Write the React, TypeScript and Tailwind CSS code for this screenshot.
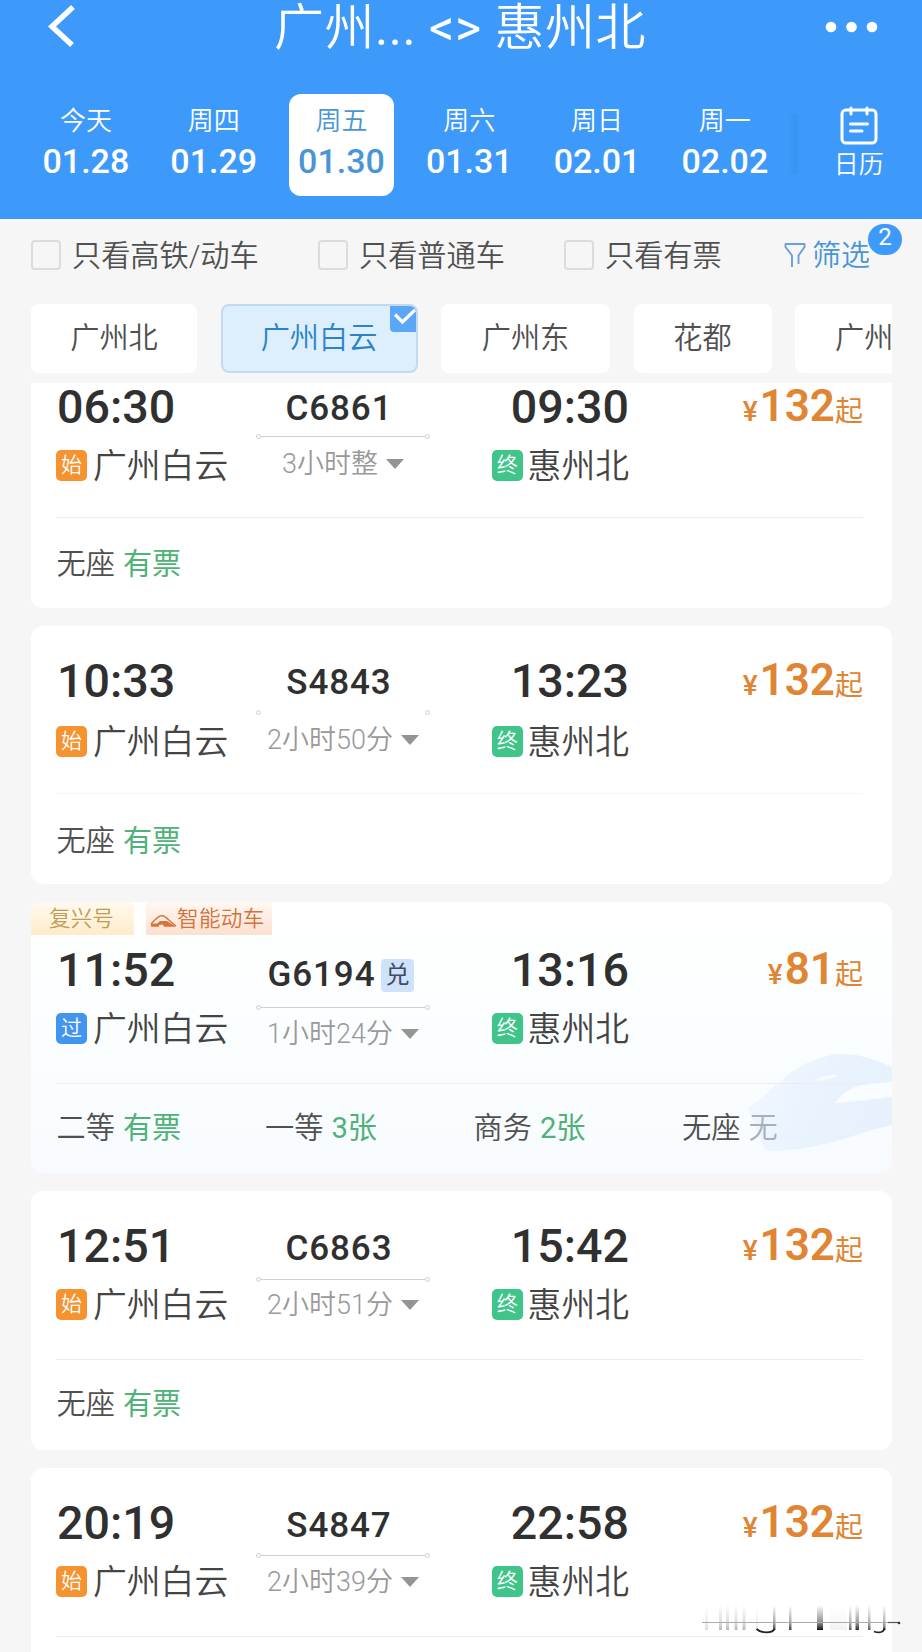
import clsx from "clsx";

type Seat = { name: string; left: string; soldOut?: boolean };

type Train = {
  no: string;
  depart: string;
  arrive: string;
  duration: string;
  price: string;
  variant: "first" | "normal" | "tight" | "smart";
  passing?: boolean;
  hideLine?: boolean;
  seats: Seat[];
};

const days = [
  { label: "今天", date: "01.28" },
  { label: "周四", date: "01.29" },
  { label: "周五", date: "01.30", active: true },
  { label: "周六", date: "01.31" },
  { label: "周日", date: "02.01" },
  { label: "周一", date: "02.02" },
];

const standing: Seat[] = [{ name: "无座", left: "有票" }];

const trains: Train[] = [
  { no: "C6861", depart: "06:30", arrive: "09:30", duration: "3小时整", price: "132", variant: "first", seats: standing },
  { no: "S4843", depart: "10:33", arrive: "13:23", duration: "2小时50分", price: "132", variant: "normal", hideLine: true, seats: standing },
  {
    no: "G6194",
    depart: "11:52",
    arrive: "13:16",
    duration: "1小时24分",
    price: "81",
    variant: "smart",
    passing: true,
    seats: [
      { name: "二等", left: "有票" },
      { name: "一等", left: "3张" },
      { name: "商务", left: "2张" },
      { name: "无座", left: "无", soldOut: true },
    ],
  },
  { no: "C6863", depart: "12:51", arrive: "15:42", duration: "2小时51分", price: "132", variant: "tight", seats: standing },
  { no: "S4847", depart: "20:19", arrive: "22:58", duration: "2小时39分", price: "132", variant: "tight", seats: standing },
];

// vertical rhythm of each kind of card
const spacing = {
  first: { info: "h-[169px]", time: "pt-[33px]", station: "mt-[14px]", no: "pt-[40px]", line: "mt-[3px]", duration: "mt-[8px]", seats: "mt-[26px]" },
  normal: { info: "h-[168.500px]", time: "pt-[30px]", station: "mt-[16px]", no: "pt-[37px]", line: "mt-[6px]", duration: "mt-[7px]", seats: "mt-[26.500px]" },
  tight: { info: "h-[169px]", time: "pt-[30px]", station: "mt-[14px]", no: "pt-[38px]", line: "mt-[6px]", duration: "mt-[6px]", seats: "mt-[24px]" },
  smart: { info: "h-[149px]", time: "pt-[10px]", station: "mt-[14px]", no: "pt-[20px]", line: "mt-[8px]", duration: "mt-[7px]", seats: "mt-[24px]" },
};

const Header = () => (
  <header className="h-[219px] bg-[#3e9afa] text-white">
    <div className="flex h-[54px] items-center justify-between pl-[46px] pr-[43px]">
      <svg width="34" height="48" viewBox="0 0 34 48" fill="none" stroke="currentColor" strokeWidth="5.5">
        <path d="M27 4 6 23.5 26 42" />
      </svg>
      <h1 className="ml-[15px] whitespace-pre pt-[2px] text-[50px] leading-[52px] font-[350] tracking-[0.5px]">
        广州<span className="font-normal">... &lt;&gt; </span>惠州北
      </h1>
      <svg width="54" height="12" viewBox="0 0 54 12" fill="currentColor">
        <circle cx="6" cy="6" r="5.3" />
        <circle cx="26.5" cy="6" r="5.3" />
        <circle cx="47" cy="6" r="5.3" />
      </svg>
    </div>

    {/* Date strip */}
    <div className="mt-10 flex pl-[22px]">
      {days.map((d) => (
        <div key={d.date} className="flex w-[127.8px] justify-center">
          <div
            className={clsx(
              "flex h-[102px] w-[105px] flex-col items-center rounded-[12px] pt-[10px]",
              d.active && "bg-white text-[#4a95d6]"
            )}
          >
            <span className="text-[26px] leading-[34px] font-[350]">{d.label}</span>
            <span className="mt-[3px] text-[34px] leading-[40px] font-medium">{d.date}</span>
          </div>
        </div>
      ))}
      <div className="mt-5 h-[60px] w-[12px] bg-linear-to-r from-[#3e9afa] via-[#3993f4] to-[#3e9afa]" />
      <div className="ml-[23px] flex w-[70px] flex-col items-center pt-[12px]">
        <svg width="40" height="40" viewBox="0 0 40 40" fill="none" stroke="currentColor" strokeWidth="3" strokeLinecap="round">
          <rect x="3" y="4" width="34" height="33" rx="4" />
          <path d="M12 2v6M28 2v6M11.5 18h17M11.5 25h11.500" />
        </svg>
        <span className="mt-[2px] text-[25px] leading-[34px] font-[350]">日历</span>
      </div>
    </div>
  </header>
);

const Check = ({ label, className }: { label: string; className: string }) => (
  <label className={clsx("flex items-center", className)}>
    <span className="h-[30px] w-[30px] rounded-[4px] border-2 border-[#dcdcdc]" />
    <span className="ml-[11px] pt-[2px] text-[29.2px] leading-[40px] font-[350] text-[#505050]">{label}</span>
  </label>
);

const Filters = () => (
  <div className="flex h-[85px] pt-[16px] pl-[31px]">
    <Check label="只看高铁/动车" className="h-10 w-[287px]" />
    <Check label="只看普通车" className="h-10 w-[246px]" />
    <Check label="只看有票" className="h-10 w-[220px]" />
    <div className="relative flex h-10 items-center text-[#4a95d6]">
      <svg width="22" height="27" viewBox="0 0 22 27" fill="none" stroke="#6d9fd8" strokeWidth="1.9" strokeLinejoin="round">
        <path d="M8 25V13.500L1.500 5V2H20.500V5L14.500 13.500V22" />
      </svg>
      <span className="ml-[6px] pt-[2px] text-[29px] leading-[40px] font-[350]">筛选</span>
      <span className="absolute -top-[11px] left-[84px] h-[31px] w-[34px] rounded-full bg-[#3e9afa] text-center text-[24px] leading-[27px] text-white">
        2
      </span>
    </div>
  </div>
);

const chip = "h-[69px] shrink-0 rounded-[8px] bg-white text-center text-[29.2px] leading-[68px] font-[350] text-[#505050]";

const Stations = () => (
  <div className="mx-[31px] flex w-[860.5px] gap-[23.5px] overflow-hidden">
    <div className={clsx(chip, "w-[166px]")}>广州北</div>
    <div className="relative h-[69px] w-[197px] shrink-0 overflow-hidden rounded-[8px] border-2 border-[#c2daf0] bg-[#ddeefd] text-center text-[29.2px] leading-[64px] font-[350] text-[#2b84cb]">
      广州白云
      <svg className="absolute top-0 right-0" width="26" height="26" viewBox="0 0 26 26" fill="none">
        <path d="M0 0H26V26H4a4 4 0 0 1-4-4Z" fill="#5aa7f8" />
        <path d="M5 8.500 12.500 16 25 4" stroke="#fff" strokeWidth="3.2" />
      </svg>
    </div>
    <div className={clsx(chip, "w-[169px]")}>广州东</div>
    <div className={clsx(chip, "w-[138px]")}>花都</div>
    <div className={clsx(chip, "w-[170px] pl-[40px] text-left")}>广州</div>
  </div>
);

const Tag = ({ text, color }: { text: string; color: string }) => (
  <span className={clsx("h-[31px] w-[31px] rounded-[5px] text-center text-[21px] leading-[30px] text-white", color)}>
    {text}
  </span>
);

const TrainCard = ({ train }: { train: Train }) => {
  const gap = spacing[train.variant];
  const smart = train.variant === "smart";

  return (
    <article
      className={clsx(
        "relative shrink-0 overflow-hidden rounded-[12px]",
        smart ? "h-[271px] bg-linear-to-b from-white via-[#fbfeff] to-[#f7fbff]" : "h-[258.5px] bg-white"
      )}
    >
      {smart && (
        <>
          <svg className="absolute right-0 bottom-0" width="160" height="130" viewBox="0 0 160 130">
            <defs>
              <linearGradient id="nose" x1="0" y1="0.300" x2="1" y2="0.600">
                <stop offset="0" stopColor="#f1f7ff" />
                <stop offset="0.5" stopColor="#e9f3fe" />
                <stop offset="1" stopColor="#e6f1fd" />
              </linearGradient>
            </defs>
            <path
              d="M16 64C30 56 40 45 50 37 60 28 70 21 83 17 95 12 102 11 112 11 130 11 148 19 160 24V39C146 40 134 41 123 44 114 48 108 53 103 60 120 59 140 56 160 54V82C140 86 120 94 97 100 80 104 60 108 43 108 36 108 32 106 32 104 26 92 20 76 16 64Z"
              fill="url(#nose)"
            />
            <path d="M83 38C88 33 98 31 106 32 102 36 92 37 83 38Z" fill="#f8fbff" />
          </svg>
          <div className="relative flex h-[33px] gap-[12px] text-[21.600px] leading-[34px] font-[350]">
            <span className="w-[103px] bg-linear-to-b from-[#fffaf0] to-[#fdecca] pr-[2px] text-center text-[#c29a55]">复兴号</span>
            <span className="flex w-[126px] items-center bg-linear-to-b from-[#fff8f3] to-[#fde0cf] pl-[4px] text-[#cf7440]">
              <svg className="mt-[5px]" width="27" height="14" viewBox="0 0 27 14">
                <path d="M1 10C5 6 8 1.500 12 1.500 16 2 19 7 26 12" fill="none" stroke="#d9743a" strokeWidth="1.400" />
                <path d="M1 9.500H7L10 7H17L26 12.800H14L13 10.500 9 11V12.800H1Z" fill="#d9743a" />
              </svg>
              <span className="tracking-[0.300px]">智能动车</span>
            </span>
          </div>
        </>
      )}

      <div className={clsx("relative mr-[28.500px] ml-[25px] flex border-b-[1.500px]", gap.info, train.hideLine ? "border-[#f5f5f5]" : "border-[#ececec]")}>
        {/* Departure */}
        <div className={clsx("w-[200px]", gap.time)}>
          <div className="pl-px text-[46.600px] leading-[50px] font-medium text-[#303030]">{train.depart}</div>
          <div className={clsx("flex items-center text-[33.800px] leading-[36px] font-[350] text-[#444]", gap.station)}>
            {train.passing ? <Tag text="过" color="bg-[#4295ee]" /> : <Tag text="始" color="bg-[#f59330]" />}
            <span className="ml-[6px] pt-[3px]">广州白云</span>
          </div>
        </div>

        {/* Train number and duration */}
        <div className={clsx("flex w-[174px] flex-col items-center", gap.no)}>
          <div className={clsx("flex items-center text-[35px] leading-[40px] font-medium tracking-[0.900px] text-[#303030]", smart ? "-ml-[4px]" : "-ml-[8px]")}>
            {train.no}
            {smart && (
              <span className="ml-[6px] h-[33px] w-[33px] rounded-[4px] bg-[#cfe2f9] text-center text-[24px] leading-[32px] font-normal text-[#3c4c66]">
                兑
              </span>
            )}
          </div>
          <div className={clsx("flex h-[8px] w-full items-center", gap.line)}>
            <i className="h-[5px] w-[5px] rounded-full border border-[#cfcfcf]" />
            <i className={clsx("h-px flex-1", !train.hideLine && "bg-[#cfcfcf]")} />
            <i className="h-[5px] w-[5px] rounded-full border border-[#cfcfcf]" />
          </div>
          <div className={clsx("flex items-center text-[27px] leading-[32px] font-[350] text-[#999]", gap.duration)}>
            {train.duration}
            <svg className="ml-[8px]" width="18" height="10" viewBox="0 0 18 10" fill="#949494">
              <path d="M0 0h18L9 10Z" />
            </svg>
          </div>
        </div>

        {/* Arrival */}
        <div className={clsx("ml-[62px] w-[137px] text-right", gap.time)}>
          <div className="text-[46.600px] leading-[50px] font-medium text-[#303030]">{train.arrive}</div>
          <div className={clsx("flex items-center text-[33.800px] leading-[36px] font-[350] text-[#444]", gap.station)}>
            <Tag text="终" color="bg-[#3fc48a]" />
            <span className="ml-[5px] pt-[3px] whitespace-nowrap">惠州北</span>
          </div>
        </div>

        {/* Price */}
        <div className={clsx("flex-1 text-right text-[28px] leading-[48px] text-[#e08534]", gap.time)}>
          <span className="mr-[2px] font-medium">¥</span>
          <span className="text-[44px] font-semibold">{train.price}</span>起
        </div>
      </div>

      <div className={clsx("relative ml-[25.500px] flex text-[29.200px] leading-[40px] font-[350] text-[#505050]", gap.seats)}>
        {train.seats.map((s) => (
          <div key={s.name} className="w-[208.500px]">
            <span>{s.name}</span>
            <span className={clsx("ml-[8px]", s.soldOut ? "text-[#a9afb8]" : "font-normal text-[#4fb277]")}>{s.left}</span>
          </div>
        ))}
      </div>
    </article>
  );
};

const Watermark = () => (
  <svg className="absolute right-[20px] bottom-[18px]" width="202" height="32" viewBox="0 0 202 32">
    <defs>
      <linearGradient id="fade" x1="0" y1="0" x2="0" y2="1">
        <stop offset="0" stopColor="#444" stopOpacity="0" />
        <stop offset="0.7" stopColor="#444" stopOpacity="0.6" />
        <stop offset="1" stopColor="#111" />
      </linearGradient>
    </defs>
    <g fill="url(#fade)">
      <rect x="5" y="3" width="3" height="25" opacity="0.15" />
      <rect x="19" y="3" width="3" height="25" opacity="0.3" />
      <rect x="26" y="3" width="3" height="25" opacity="0.3" />
      <rect x="34.500" y="3" width="3" height="25" opacity="0.3" />
      <rect x="42.500" y="3" width="3" height="25" opacity="0.3" />
      <rect x="56" y="3" width="2" height="25" opacity="0.12" />
      <rect x="73" y="3" width="2.500" height="25" opacity="0.8" />
      <rect x="89" y="3" width="2.500" height="25" opacity="0.8" />
      <rect x="117" y="3" width="6" height="25" />
      <rect x="130" y="3" width="17" height="25" opacity="0.06" />
      <rect x="149" y="3" width="2.500" height="25" opacity="0.7" />
      <rect x="155.500" y="3" width="3.500" height="25" opacity="0.9" />
      <rect x="168" y="3" width="2.500" height="25" opacity="0.7" />
      <rect x="183" y="3" width="2.500" height="25" opacity="0.7" />
    </g>
    <path d="M56.500 27C61 31.500 72 31.500 74.500 27M174 29.500C180 31.500 184 30 184.500 26" fill="none" stroke="#222" strokeWidth="1.800" />
    <path d="M2 20.500H190" stroke="#aaa" strokeWidth="1" />
    <path d="M188 20.500H199" stroke="#555" strokeWidth="1.200" />
    <circle cx="199" cy="21" r="1.300" fill="#333" />
  </svg>
);

const App = () => {
  return (
    <div className="relative h-[1652px] w-[922px] overflow-hidden bg-[#f6f6f6] font-['Roboto','Noto_Sans_CJK_SC',sans-serif]">
      <Header />
      <Filters />
      <Stations />

      {/* Train list, scrolled a little under the station bar */}
      <main className="mx-[31px] mt-[10px] h-[1269px] w-[860.5px] overflow-hidden">
        <div className="-mt-[34px] flex flex-col gap-[18px]">
          {trains.map((t) => (
            <TrainCard key={t.no} train={t} />
          ))}
        </div>
      </main>

      <Watermark />
    </div>
  );
};

export default App;
